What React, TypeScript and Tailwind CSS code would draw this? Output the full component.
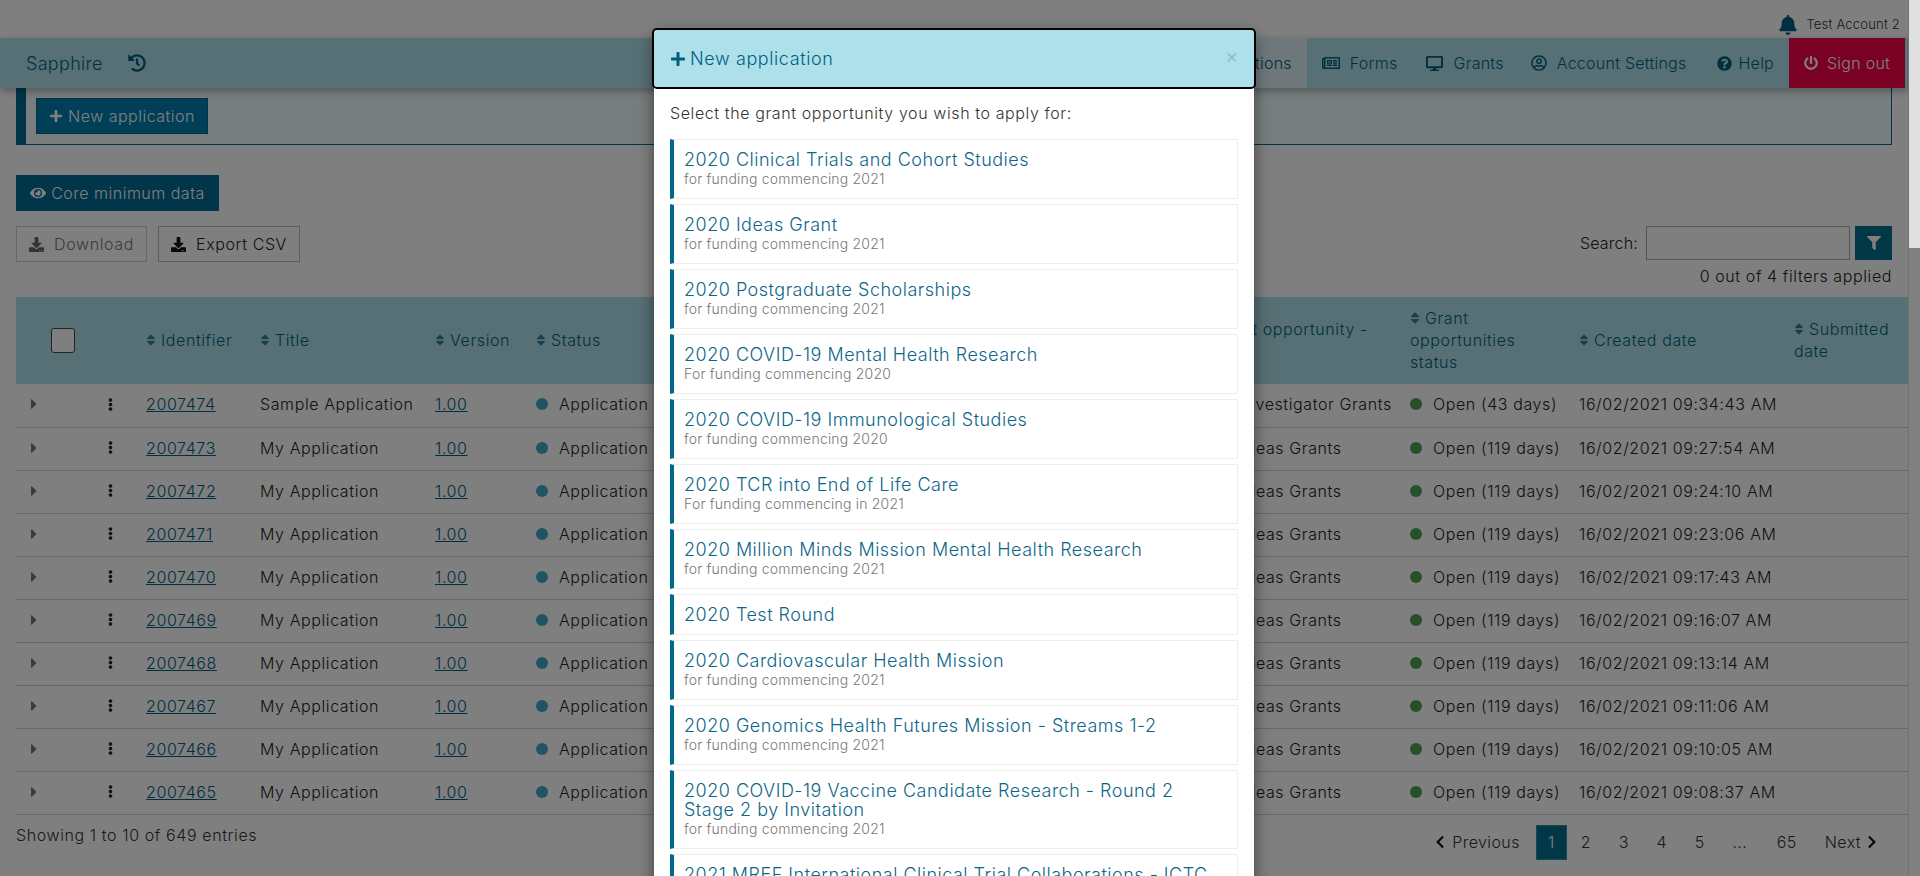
import {
  FaBell,
  FaCaretRight,
  FaChevronLeft,
  FaChevronRight,
  FaDesktop,
  FaDownload,
  FaEllipsisV,
  FaEye,
  FaFilter,
  FaHistory,
  FaPlus,
  FaPowerOff,
  FaQuestionCircle,
  FaRegNewspaper,
  FaRegUserCircle,
  FaSort,
} from "react-icons/fa";

const rows = [
  { id: "2007474", title: "Sample Application", round: "Investigator Grants", open: "Open (43 days)", created: "09:34:43 AM" },
  { id: "2007473", title: "My Application", round: "Ideas Grants", open: "Open (119 days)", created: "09:27:54 AM" },
  { id: "2007472", title: "My Application", round: "Ideas Grants", open: "Open (119 days)", created: "09:24:10 AM" },
  { id: "2007471", title: "My Application", round: "Ideas Grants", open: "Open (119 days)", created: "09:23:06 AM" },
  { id: "2007470", title: "My Application", round: "Ideas Grants", open: "Open (119 days)", created: "09:17:43 AM" },
  { id: "2007469", title: "My Application", round: "Ideas Grants", open: "Open (119 days)", created: "09:16:07 AM" },
  { id: "2007468", title: "My Application", round: "Ideas Grants", open: "Open (119 days)", created: "09:13:14 AM" },
  { id: "2007467", title: "My Application", round: "Ideas Grants", open: "Open (119 days)", created: "09:11:06 AM" },
  { id: "2007466", title: "My Application", round: "Ideas Grants", open: "Open (119 days)", created: "09:10:05 AM" },
  { id: "2007465", title: "My Application", round: "Ideas Grants", open: "Open (119 days)", created: "09:08:37 AM" },
];

const grants = [
  { name: "2020 Clinical Trials and Cohort Studies", note: "for funding commencing 2021" },
  { name: "2020 Ideas Grant", note: "for funding commencing 2021" },
  { name: "2020 Postgraduate Scholarships", note: "for funding commencing 2021" },
  { name: "2020 COVID-19 Mental Health Research", note: "For funding commencing 2020" },
  { name: "2020 COVID-19 Immunological Studies", note: "for funding commencing 2020" },
  { name: "2020 TCR into End of Life Care", note: "For funding commencing in 2021" },
  { name: "2020 Million Minds Mission Mental Health Research", note: "for funding commencing 2021" },
  { name: "2020 Test Round", note: "" },
  { name: "2020 Cardiovascular Health Mission", note: "for funding commencing 2021" },
  { name: "2020 Genomics Health Futures Mission - Streams 1-2", note: "for funding commencing 2021" },
  { name: "2020 COVID-19 Vaccine Candidate Research - Round 2 Stage 2 by Invitation", note: "for funding commencing 2021" },
  { name: "2021 MREF International Clinical Trial Collaborations - ICTC", note: "for funding commencing 2021" },
];

const navItems = [
  { label: "Forms", spacing: "gap-[10px] pl-[15px] pr-[14px]", icon: <FaRegNewspaper className="text-[18px]" /> },
  { label: "Grants", spacing: "gap-[10px] pl-[15px] pr-[12px]", icon: <FaDesktop className="text-[17px]" /> },
  { label: "Account Settings", spacing: "gap-[10px] px-[15px]", icon: <FaRegUserCircle className="text-[16px]" /> },
  { label: "Help", spacing: "gap-[7px] px-[15px]", icon: <FaQuestionCircle className="text-[15px]" /> },
];

function Th({ label, inset = "pl-[10px]" }: { label: string; inset?: string }) {
  return (
    <th className={`${inset} pr-[4px] pb-[2px] text-left font-light align-middle leading-[22px]`}>
      <FaSort className="inline text-[14px] -ml-[2px] mr-[3px] mb-[3px] text-[#2f7f9c]" />
      {label}
    </th>
  );
}

function Header() {
  return (
    <>
      <div className="h-[38px] flex justify-end items-center gap-[8px] pr-[8px] pt-[12px] text-[13px] tracking-[0.2px] font-light text-[#333]">
        <FaBell className="text-[20px] text-[#00607f]" />
        <span>Test Account 2</span>
      </div>
      <nav className="h-[50px] flex items-stretch justify-between bg-[#aee0eb] pr-[3px] text-[16px] tracking-[0.25px] font-light text-[#00607f] shadow-[0_3px_8px_rgba(0,0,0,0.3)] relative">
        <div className="flex items-center pl-[26px]">
          <span className="text-[18px] tracking-[0.3px]">Sapphire</span>
          <FaHistory className="ml-[25px] text-[18px]" />
        </div>
        <div className="flex items-stretch">
          <div className="flex items-center bg-[#dcf1f6] pl-[30px] pr-[15px]">Applications</div>
          {navItems.map((item) => (
            <div key={item.label} className={`flex items-center ${item.spacing}`}>
              {item.icon}
              <span>{item.label}</span>
            </div>
          ))}
          <div className="flex items-center gap-[9px] bg-[#f40048] text-white pl-[15px] w-[116px]">
            <FaPowerOff className="text-[14px]" />
            <span>Sign out</span>
          </div>
        </div>
      </nav>
    </>
  );
}

function DataTable() {
  return (
    <table className="table-fixed w-[1894px] border-collapse text-[16px] tracking-[0.6px] font-light text-[#222]">
      <colgroup>
        <col className="w-[80px]" />
        <col className="w-[40px]" />
        <col className="w-[114px]" />
        <col className="w-[175px]" />
        <col className="w-[101px]" />
        <col className="w-[658px]" />
        <col className="w-[216px]" />
        <col className="w-[169px]" />
        <col className="w-[215px]" />
        <col className="w-[126px]" />
      </colgroup>
      <thead>
        <tr className="h-[87px] bg-[#aee0eb] text-[#00607f]">
          <th className="pl-[35px] align-middle">
            <div className="w-[24px] h-[25px] rounded-[3px] border border-[#444] bg-white" />
          </th>
          <th />
          <Th label="Identifier" />
          <Th label="Title" />
          <Th label="Version" />
          <Th label="Status" />
          <Th label="Grant opportunity - name" inset="pl-[15px]" />
          <Th label="Grant opportunities status" />
          <Th label="Created date" />
          <Th label="Submitted date" />
        </tr>
      </thead>
      <tbody>
        {rows.map((row) => (
          <tr key={row.id} className="h-[43px] border-b border-[#cfcfcf] [&>td]:pb-[2px]">
            <td className="pl-[10px]">
              <FaCaretRight className="text-[16px] text-[#777]" />
            </td>
            <td className="pl-[8px]">
              <FaEllipsisV className="text-[13px] text-[#222]" />
            </td>
            <td className="pl-[10px]">
              <a className="underline text-[#00607f]">{row.id}</a>
            </td>
            <td className="pl-[10px] whitespace-nowrap">{row.title}</td>
            <td className="pl-[10px]">
              <a className="underline text-[#00607f]">1.00</a>
            </td>
            <td className="pl-[10px]">
              <div className="flex items-center gap-[11px]">
                <span className="w-[12px] h-[12px] rounded-full bg-[#3fa9c9]" />
                <span>Application in progress</span>
              </div>
            </td>
            <td className="pl-[10px] whitespace-nowrap">2020 {row.round}</td>
            <td className="pl-[10px]">
              <div className="flex items-center gap-[11px] whitespace-nowrap">
                <span className="w-[12px] h-[12px] rounded-full bg-[#4f9f55]" />
                <span>{row.open}</span>
              </div>
            </td>
            <td className="pl-[10px] whitespace-nowrap">16/02/2021 {row.created}</td>
            <td />
          </tr>
        ))}
      </tbody>
    </table>
  );
}

function Pagination() {
  return (
    <div className="flex items-center h-[35px] pr-[13px] text-[16px] tracking-[0.4px] font-light text-[#333]">
      <FaChevronLeft className="text-[14px] mr-[5px] text-[#111]" />
      <span className="mr-[16px]">Previous</span>
      <span className="w-[31px] h-[35px] flex items-center justify-center bg-[#00708f] border border-[#2f8fa8] text-white">1</span>
      <span className="w-[38px] text-center">2</span>
      <span className="w-[38px] text-center">3</span>
      <span className="w-[38px] text-center">4</span>
      <span className="w-[38px] text-center">5</span>
      <span className="w-[42px] text-center">...</span>
      <span className="w-[52px] text-center">65</span>
      <span className="ml-[12px]">Next</span>
      <FaChevronRight className="text-[14px] ml-[4px] text-[#111]" />
    </div>
  );
}

function Modal() {
  return (
    <div className="absolute left-[654px] top-[30px] w-[600px] h-[900px] bg-white shadow-[0_5px_15px_rgba(0,0,0,0.5)]">
      <div className="h-[57px] flex items-center justify-between bg-[#aee0eb] outline-2 outline-black rounded-[3px] pl-[16px] pr-[15px] text-[#00607f] text-[18px] tracking-[0.6px] font-light">
        <div className="flex items-center gap-[4px]">
          <FaPlus className="text-[16px]" />
          <span>New application</span>
        </div>
        <span className="text-[#8fb4bd] text-[20px] mb-[6px]">×</span>
      </div>
      <div className="px-[16px] pt-[16px]">
        <p className="text-[16px] tracking-[0.6px] leading-[20px] font-light text-[#333] mb-[16px]">
          Select the grant opportunity you wish to apply for:
        </p>
        <div className="flex flex-col gap-[5px]">
          {grants.map((g) => (
            <div key={g.name} className="border border-[#eeeeee] border-l-[4px] border-l-[#006a8a] pl-[10px] pr-[20px] py-[10px]">
              <div className="text-[18px] tracking-[0.5px] leading-[19px] font-light text-[#0d6688]">{g.name}</div>
              {g.note && <div className="text-[14px] tracking-[0.2px] leading-[19px] font-light text-[#777]">{g.note}</div>}
            </div>
          ))}
        </div>
      </div>
    </div>
  );
}

export default function App() {
  return (
    <div className="relative h-[876px] w-[1920px] overflow-hidden bg-white font-['Inter',sans-serif]">
      <div className="w-[1908px]">
        <Header />
        <main className="px-[16px]">
          <div className="h-[57px] bg-[#eefdfb] border-l-[10px] border-l-[#00688f] border-r border-b border-[#006f8f] pl-[10px] pt-[10px]">
            <button className="h-[36px] w-[172px] flex items-center justify-center gap-[5px] bg-[#007fae] border border-[#00638a] text-white text-[16px] tracking-[0.5px] font-light">
              <FaPlus className="text-[14px]" />
              New application
            </button>
          </div>
          <button className="mt-[30px] h-[36px] w-[203px] flex items-center justify-center gap-[5px] bg-[#006a94] text-white text-[16px] tracking-[0.5px] font-light">
            <FaEye className="text-[16px]" />
            Core minimum data
          </button>
          <div className="mt-[15px] flex justify-between items-start text-[16px] tracking-[0.6px] font-light">
            <div className="flex gap-[11px]">
              <button className="h-[36px] w-[131px] flex items-center justify-center gap-[10px] border border-[#cccccc] text-[#777]">
                <FaDownload className="text-[15px] text-[#666]" />
                Download
              </button>
              <button className="h-[36px] w-[142px] flex items-center justify-center gap-[10px] border border-[#bbbbbb] text-[#222]">
                <FaDownload className="text-[15px] text-[#111]" />
                Export CSV
              </button>
            </div>
            <div className="flex items-center text-[#222]">
              <span className="mr-[8px] tracking-[0.2px]">Search:</span>
              <div className="w-[204px] h-[34px] border border-[#aaaaaa] bg-white mr-[5px]" />
              <button className="w-[37px] h-[34px] flex items-center justify-center bg-[#00708f] text-white">
                <FaFilter className="text-[14px]" />
              </button>
            </div>
          </div>
          <div className="mt-[4px] h-[20px] text-right text-[16px] tracking-[0.6px] leading-[20px] font-light text-[#222]">
            0 out of 4 filters applied
          </div>
          <div className="mt-[11px]">
            <DataTable />
          </div>
          <div className="mt-[10px] flex justify-between items-start">
            <span className="-mt-[1px] text-[16px] tracking-[0.6px] font-light leading-[22px] text-[#333]">Showing 1 to 10 of 649 entries</span>
            <Pagination />
          </div>
        </main>
      </div>

      <div className="absolute inset-0 bg-black/50">
        <Modal />
      </div>

      <div className="absolute right-0 top-0 bottom-0 w-[12px] border-l border-[#727272] bg-[#808080]">
        <div className="h-[248px] bg-[#e0e0e0]" />
      </div>
    </div>
  );
}
